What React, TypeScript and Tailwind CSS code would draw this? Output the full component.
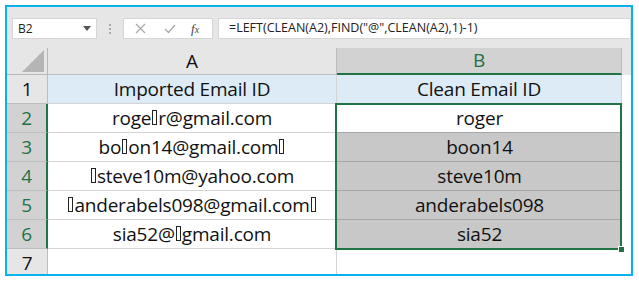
import React from "react";

const cellFont = { fontFamily: '"Open Sans", "Liberation Sans", sans-serif' };

function Box() {
  return (
    <span className="inline-block align-middle w-[5px] h-[15px] border border-[#222] mx-[1px] -mt-[2px]" />
  );
}

const rowsA: React.ReactNode[] = [
  <>roge<Box />r@gmail.com</>,
  <>bo<Box />on14@gmail.com<Box /></>,
  <><Box />steve10m@yahoo.com</>,
  <><Box />anderabels098@gmail.com<Box /></>,
  <>sia52@<Box />gmail.com</>,
];
const rowsB = ["roger", "boon14", "steve10m", "anderabels098", "sia52"];

export default function App() {
  return (
    <div className="w-[639px] h-[282px] bg-white pt-[5px] pl-[5px]">
      <div className="w-[628px] h-[271px] border-2 border-[#0bb0ef] flex flex-col overflow-hidden bg-white">
        {/* formula bar */}
        <div className="h-[41px] bg-[#e6e6e6] flex items-start pt-[11px] pl-[5px] shrink-0">
          <div className="w-[85px] h-[21px] bg-white border border-[#d6d6d6] flex items-center justify-between pl-[5px] pr-[5px]">
            <span className="text-[12px] text-[#222]" style={{ fontFamily: '"Open Sans", sans-serif' }}>B2</span>
            <svg width="8" height="5" viewBox="0 0 8 5"><path d="M0 0 L8 0 L4 5 Z" fill="#555" /></svg>
          </div>
          <div className="w-[26px] h-[21px] flex flex-col items-center justify-center gap-[2px]">
            <span className="w-[2px] h-[2px] bg-[#aaa]" />
            <span className="w-[2px] h-[2px] bg-[#aaa]" />
            <span className="w-[2px] h-[2px] bg-[#aaa]" />
          </div>
          <div className="w-[90px] h-[21px] bg-white border border-[#d6d6d6] flex items-center pl-[11px]">
            <svg width="11" height="11" viewBox="0 0 11 11"><path d="M1 1 L10 10 M10 1 L1 10" stroke="#a8a8a8" strokeWidth="1.2" /></svg>
            <svg className="ml-[18px]" width="12" height="10" viewBox="0 0 12 10"><path d="M1 5 L4.5 8.5 L11 1" stroke="#a8a8a8" strokeWidth="1.2" fill="none" /></svg>
            <span className="ml-[15px] text-[13px] italic text-[#444] leading-none" style={{ fontFamily: '"Liberation Serif", serif' }}>f<span className="text-[10px]">x</span></span>
          </div>
          <div className="ml-[5px] flex-1 h-[21px] bg-white border border-[#d6d6d6] flex items-center pl-[10px]">
            <span className="text-[12.5px] text-[#222]" style={{ fontFamily: '"Open Sans", sans-serif' }}>=LEFT(CLEAN(A2),FIND("@",CLEAN(A2),1)-1)</span>
          </div>
        </div>

        {/* grid */}
        <div className="relative grid grid-cols-[41px_289px_285px_9px] grid-rows-[27px_29px_29px_29px_29px_29px_29px_29px] text-[19px] tracking-[-0.2px] text-[#111]" style={cellFont}>
          {/* header row */}
          <div className="bg-[#e6e6e6] border-r border-b border-[#b8b8b8] relative">
            <svg className="absolute right-[3px] bottom-[2px]" width="22" height="22" viewBox="0 0 22 22"><path d="M22 0 L22 22 L0 22 Z" fill="#b5b5b5" /></svg>
          </div>
          <div className="bg-[#e6e6e6] border-r border-b border-[#bdbdbd] flex items-center justify-center leading-none">A</div>
          <div className="bg-[#d2d2d2] border-r border-[#bdbdbd] border-b-2 border-b-[#217346] flex items-center justify-center leading-none text-[#217346]">B</div>
          <div className="bg-[#e6e6e6]" />

          {/* row 1 */}
          <div className="bg-[#e6e6e6] border-r border-b border-[#bdbdbd] flex items-center justify-center leading-none">1</div>
          <div className="bg-[#ddebf7] border-r border-b border-[#d4d4d4] flex items-center justify-center leading-none">Imported Email ID</div>
          <div className="bg-[#ddebf7] border-r border-b border-[#d4d4d4] flex items-center justify-center leading-none">Clean Email ID</div>
          <div className="bg-white" />

          {rowsA.map((a, i) => (
            <React.Fragment key={i}>
              <div className="bg-[#d2d2d2] border-r-2 border-r-[#217346] border-b border-b-[#bdbdbd] flex items-center justify-center leading-none text-[#217346]">{i + 2}</div>
              <div className="bg-white border-r border-b border-[#d4d4d4] flex items-center justify-center leading-none whitespace-nowrap">{a}</div>
              <div className={(i === 0 ? "bg-white" : "bg-[#c8c8c8]") + " border-b border-[#a6a6a6] flex items-center justify-center leading-none"}>{rowsB[i]}</div>
              <div className="bg-white" />
            </React.Fragment>
          ))}

          {/* row 7 */}
          <div className="bg-[#e6e6e6] border-r border-[#bdbdbd] flex items-center justify-center leading-none">7</div>
          <div className="bg-white border-r border-[#d4d4d4]" />
          <div className="bg-white" />
          <div className="bg-white" />

          {/* selection overlay */}
          <div className="absolute left-[328px] top-[55px] w-[287px] h-[147px] border-2 border-[#217346] pointer-events-none" />
          <div className="absolute left-[611px] top-[198px] w-[7px] h-[7px] bg-[#217346] border border-white pointer-events-none" />
        </div>
      </div>
    </div>
  );
}
